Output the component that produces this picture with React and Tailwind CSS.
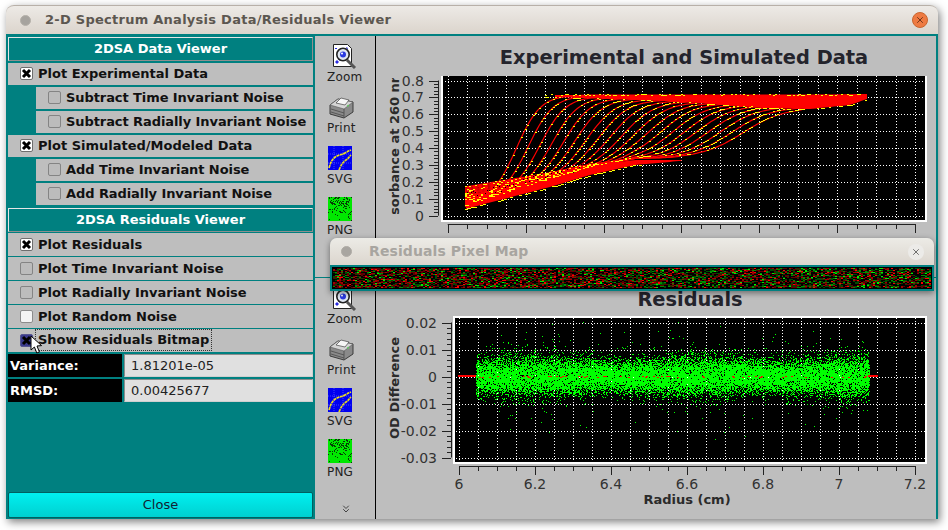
import { X, ChevronsDown } from 'lucide-react'

const rng = (seed) => () => {
  seed |= 0
  seed = (seed + 0x6d2b79f5) | 0
  let t = Math.imul(seed ^ (seed >>> 15), 1 | seed)
  t = (t + Math.imul(t ^ (t >>> 7), 61 | t)) ^ t
  return ((t ^ (t >>> 14)) >>> 0) / 4294967296
}

const lerp = (points, x) => {
  if (x <= points[0][0]) return points[0][1]
  for (let i = 1; i < points.length; i++) {
    if (x <= points[i][0]) {
      const [x0, y0] = points[i - 1]
      const [x1, y1] = points[i]
      return y0 + ((y1 - y0) * (x - x0)) / (x1 - x0)
    }
  }
  return points[points.length - 1][1]
}

const lowerEdge = [[465, 209], [500, 200], [550, 187], [590, 175], [635, 165], [680, 161], [760, 158]]
const solidTop = [[465, 196], [500, 189], [548, 177], [600, 164], [635, 160], [682, 160]]
const plateauLow = [[555, 97], [640, 100], [700, 103], [763, 108], [810, 109], [850, 105], [867, 99]]

function buildExperimental() {
  const rand = rng(11)
  const n = 20
  const curves = []
  let yellow = ''
  let black = ''
  for (let i = 0; i < n; i++) {
    const mid = 518 + (i * 227) / (n - 1)
    const width = 12 + i * 0.42
    let line = ''
    for (let x = 465; x <= 867; x += 2) {
      const base = lerp(lowerEdge, x) - (22 - Math.min(19, (x - 465) / 11)) * (i / n + 0.05)
      const settle = Math.max(0, Math.min(1, (x - 800) / 67))
      const top = 95 + (i / n) * 13 * (1 - settle)
      const s = 1 / (1 + Math.exp(-(x - mid) / width))
      const y = base + (top - base) * s
      line += `${x === 465 ? 'M' : 'L'}${x} ${y.toFixed(1)}`
      if (s < 0.95) {
        const chance = s < 0.1 ? 0.16 : 0.45
        if (rand() < chance) yellow += `M${x} ${Math.round(y - 1)}h2v1h-2z`
      }
    }
    curves.push(line)
  }
  for (let x = 465; x < 600; x += 2) {
    const top = lerp(solidTop, x) - 6
    if (rand() < 0.7) black += `M${x} ${Math.round(top + rand() * 8)}h1v1h-1z`
  }
  for (let x = 545; x <= 867; x += 2) {
    if (rand() < 0.45) yellow += `M${x} ${94 + Math.round(rand())}h2v1h-2z`
    if (rand() < 0.35) yellow += `M${x} ${Math.round(lerp(plateauLow, x))}h2v1h-2z`
  }
  for (let x = 465; x < 640; x += 3) {
    if (rand() < 0.6) yellow += `M${x} ${Math.round(lerp(lowerEdge, x))}h3v1h-3z`
  }
  const band = (top, bottom, from, to) => {
    let d = ''
    for (let x = from; x <= to; x += 3) d += `${d ? 'L' : 'M'}${x} ${lerp(top, x)}`
    for (let x = to; x >= from; x -= 3) d += `L${x} ${lerp(bottom, x)}`
    return d + 'z'
  }
  return {
    curves,
    yellow,
    black,
    lowBand: band(solidTop, lowerEdge, 465, 682),
    highBand: band([[555, 95], [867, 95]], plateauLow, 555, 867),
  }
}

function buildResiduals() {
  const rand = rng(29)
  const gauss = () => Math.sqrt(-2 * Math.log(rand() + 1e-6)) * Math.cos(6.2832 * rand())
  let green = ''
  let red = ''
  for (let x = 476; x <= 868; x++) {
    const wave = 1 + 0.14 * Math.sin(x / 26)
    for (let k = 0; k < 60; k++) {
      const sd = (rand() < 0.025 ? 22 : 9) * wave
      const y = Math.round(376 + gauss() * sd)
      green += `M${x} ${y}h${rand() < 0.4 ? 2 : 1}v1h-1z`
    }
    if (rand() < 0.14) red += `M${x} ${376 + Math.round(rand())}h2v1h-2z`
  }
  return { green, red }
}

function buildPixelMap() {
  const rand = rng(5)
  const paths = { '#ff0000': '', '#a00000': '', '#5c0000': '', '#00f000': '', '#009000': '', '#004c00': '' }
  const keys = Object.keys(paths)
  for (let y = 0; y < 20; y++) {
    for (let x = 0; x < 600; x += 2) {
      if (rand() < 0.62) {
        const redShare = x < 300 ? 0.62 : 0.5
        const v = rand()
        const tone = v < 0.12 ? 0 : v < 0.45 ? 1 : 2
        paths[keys[(rand() < redShare ? 0 : 3) + tone]] += `M${x} ${y}h2v1h-2z`
      }
    }
  }
  return paths
}

function buildNoiseIcon() {
  const rand = rng(3)
  let dark = ''
  for (let y = 0; y < 24; y++) {
    for (let x = 0; x < 24; x++) {
      if (rand() < Math.max(0.08, 0.42 - y * 0.02)) dark += `M${x} ${y}h1v1h-1z`
    }
  }
  return dark
}

const experimental = buildExperimental()
const residuals = buildResiduals()
const pixelMap = buildPixelMap()
const noiseIcon = buildNoiseIcon()

function Check({ state }) {
  const look = {
    checked: 'bg-white border-[#6e6e6e]',
    focus: 'bg-[#3a3a8c] border-[#55558f]',
    disabled: 'bg-[#bcbcbc] border-[#848484]',
    off: 'bg-[#f4f4f4] border-[#8c8c8c]',
  }[state]
  return (
    <span className={`flex h-[13px] w-[13px] shrink-0 items-center justify-center rounded-[2px] border ${look}`}>
      {(state === 'checked' || state === 'focus') && (
        <svg width="11" height="11" viewBox="0 0 11 11">
          <path d="M2 2l7 7M9 2l-7 7" stroke="#000" strokeWidth="3" />
        </svg>
      )}
    </span>
  )
}

function Row({ label, state, sub, focused }) {
  return (
    <div className={`flex h-[22.5px] items-center bg-[#bebebe] ${sub ? 'ml-[28px] pl-[12px] tracking-[-0.08px]' : 'pl-[12px]'}`}>
      <Check state={state} />
      {focused ? (
        <span className="ml-[2px] border border-dotted border-[#333] pr-[2px] pl-[2px] text-[13px] leading-[20px] font-bold text-[#111]">
          {label}
        </span>
      ) : (
        <span className="ml-[5px] text-[13px] font-bold text-[#111]">{label}</span>
      )}
    </div>
  )
}

function Banner({ children, className = '' }) {
  return (
    <div
      className={`flex h-[24px] items-center justify-center border border-t-[#e6e6e6] border-r-[#8f8f8f] border-b-[#8f8f8f] border-l-[#e6e6e6] bg-[#008080] text-[13px] font-bold text-white ${className}`}
    >
      {children}
    </div>
  )
}

function Readout({ label, value }) {
  return (
    <div className="mt-[1px] flex h-[22.5px] gap-[2px]">
      <div className="flex w-[114px] items-center bg-black pl-[2px] text-[13px] font-bold text-white">{label}</div>
      <div className="flex flex-1 items-center border border-t-[#8c8c8c] border-r-[#cfcfcf] border-b-[#cfcfcf] border-l-[#8c8c8c] bg-[#e0e0e0] pl-[6px] text-[13px] text-[#222]">
        {value}
      </div>
    </div>
  )
}

function ZoomIcon() {
  return (
    <svg width="26" height="26" viewBox="0 0 26 26">
      <path d="M1.5 1.5h14l4 4v18h-18z" fill="#fff" stroke="#222" />
      <path d="M3 19l2-2 2 2-2 2zM6 16l1-1 2 1-1 2zM14 4l2 1-1 2zM3 5h2v1H3z" fill="#2a2ae0" />
      <path d="M15 17l8 8" stroke="#555" strokeWidth="3" />
      <circle cx="11" cy="11.5" r="6.2" fill="#dfe6f2" stroke="#222" strokeWidth="1.6" />
      <circle cx="11" cy="11.5" r="3" fill="#2a3ae0" />
      <circle cx="10" cy="10.5" r="1" fill="#fff" />
    </svg>
  )
}

function PrintIcon() {
  return (
    <svg width="25" height="25" viewBox="0 0 25 25">
      <path d="M1 10l8-6 15 3v10l-9 6-14-4z" fill="#8a8a8a" stroke="#3c3c3c" />
      <path d="M1 10l14 4 9-7-15-3z" fill="#d4d4d4" stroke="#555" strokeWidth="0.6" />
      <path d="M7 8l5-5 8 2-4 5z" fill="#f6f6f6" stroke="#444" strokeWidth="0.7" />
      <path d="M15 14v9M2 14l13 4M2 17l13 4" stroke="#4a4a4a" strokeWidth="0.8" />
      <path d="M18 10.5l2-1v1.5l-2 1z" fill="#5ec45e" />
    </svg>
  )
}

function SvgIcon() {
  return (
    <svg width="24" height="24" viewBox="0 0 24 24">
      <rect width="24" height="24" fill="#0000f0" />
      <path d="M6 0v24M15 0v24M0 8h24M0 17h24" stroke="#8a8aff" strokeWidth="0.5" strokeDasharray="1 1" />
      <path d="M1 22C3 15 5 12 9 10s5-1 8-3 4-2 6-3" fill="none" stroke="#f0e020" strokeWidth="1.7" strokeDasharray="3 0.6" />
      <path d="M11 24c2-5 4-8 7-10s3-3 5-5" fill="none" stroke="#e8d820" strokeWidth="1.7" strokeDasharray="3 0.6" />
    </svg>
  )
}

function PngIcon() {
  return (
    <svg width="24" height="24" viewBox="0 0 24 24" shapeRendering="crispEdges">
      <rect width="24" height="24" fill="#00e800" />
      <path d={noiseIcon} fill="#063a06" />
    </svg>
  )
}

function Tool({ icon, label }) {
  return (
    <div className="flex h-[51px] flex-col items-center">
      <div className="flex h-[24px] items-center">{icon}</div>
      <span className="mt-[1px] text-[12px] leading-[17px] tracking-[0.2px] text-[#222]">{label}</span>
    </div>
  )
}

function Toolbar() {
  return (
    <div className="flex w-[61px] shrink-0 flex-col items-start border-r border-black pt-[8px] pl-[12px]">
      <Tool icon={<ZoomIcon />} label="Zoom" />
      <Tool icon={<PrintIcon />} label="Print" />
      <Tool icon={<SvgIcon />} label="SVG" />
      <Tool icon={<PngIcon />} label="PNG" />
    </div>
  )
}

function range(from, to, step) {
  const out = []
  for (let v = from; v <= to + 0.01; v += step) out.push(v)
  return out
}

function Grid({ left, right, top, bottom, xs, ys }) {
  return (
    <g stroke="#fff" strokeWidth="1" strokeDasharray="1 2">
      {xs.map((x) => (
        <line key={x} x1={Math.round(x) + 0.5} x2={Math.round(x) + 0.5} y1={top} y2={bottom} />
      ))}
      {ys.map((y) => (
        <line key={y} x1={left} x2={right} y1={Math.round(y) + 0.5} y2={Math.round(y) + 0.5} />
      ))}
    </g>
  )
}

function YAxis({ x, start, step, count, labels }) {
  const ticks = range(0, (count - 1) * 5, 1)
  return (
    <g stroke="#222" fontFamily="'DejaVu Sans', sans-serif">
      <line x1={x + 0.5} x2={x + 0.5} y1={start} y2={start + step * (count - 1)} />
      {ticks.map((i) => {
        const y = Math.round(start + (i * step) / 5) + 0.5
        return <line key={i} x1={x - (i % 5 === 0 ? 9 : 4)} x2={x} y1={y} y2={y} />
      })}
      {labels.map((label, i) => (
        <text key={label} x={x - 14} y={start + step * i + 5} textAnchor="end" fontSize="14" fill="#333" stroke="none">
          {label}
        </text>
      ))}
    </g>
  )
}

function XAxis({ y, start, step, count }) {
  const ticks = range(0, (count - 1) * 4, 1)
  return (
    <g stroke="#222">
      <line x1={start} x2={start + step * (count - 1)} y1={y + 0.5} y2={y + 0.5} />
      {ticks.map((i) => {
        const x = Math.round(start + (i * step) / 4) + 0.5
        return <line key={i} x1={x} x2={x} y1={y} y2={y + (i % 4 === 0 ? 9 : 5)} />
      })}
    </g>
  )
}

function ExperimentalPlot() {
  return (
    <svg className="block" width="560" height="201" viewBox="376 76 560 201">
      <clipPath id="ytitle">
        <rect x="380" y="78" width="30" height="136" />
      </clipPath>
      <g clipPath="url(#ytitle)">
        <text
          transform="translate(399 152) rotate(-90)"
          textAnchor="middle"
          fontFamily="'DejaVu Sans', sans-serif"
          fontWeight="700"
          fontSize="13"
          fill="#2b2b2b"
        >
          Absorbance at 260 nm
        </text>
      </g>
      <YAxis x={438} start={80.5} step={16.9} count={9} labels={['0.8', '0.7', '0.6', '0.5', '0.4', '0.3', '0.2', '0.1', '0']} />
      <XAxis y={224} start={447.7} step={77.9} count={7} />
      <rect x="441" y="76" width="486" height="146" fill="#fff" />
      <rect x="443" y="76" width="482" height="144" fill="#000" />
      <Grid
        left={445}
        right={925}
        top={76}
        bottom={220}
        xs={range(447.7, 915, 19.47)}
        ys={range(80.5, 216, 16.9)}
      />
      <path d={experimental.lowBand} fill="#ff0000" />
      <path d={experimental.highBand} fill="#ff0000" />
      {experimental.curves.map((d) => (
        <path key={d} d={d} fill="none" stroke="#ff0000" strokeWidth="1.2" />
      ))}
      <g shapeRendering="crispEdges">
        <path d={experimental.black} fill="#000" />
        <path d={experimental.yellow} fill="#ffff00" />
      </g>
    </svg>
  )
}

function ResidualsPlot() {
  const xLabels = ['6', '6.2', '6.4', '6.6', '6.8', '7', '7.2']
  return (
    <svg className="block" width="560" height="201" viewBox="376 316 560 201" fontFamily="'DejaVu Sans', sans-serif">
      <text
        transform="translate(399 388) rotate(-90)"
        textAnchor="middle"
        fontWeight="700"
        fontSize="13"
        fill="#2b2b2b"
      >
        OD Difference
      </text>
      <YAxis x={451} start={322.5} step={27} count={6} labels={['0.02', '0.01', '0', '-0.01', '-0.02', '-0.03']} />
      <XAxis y={466} start={459} step={76} count={7} />
      {xLabels.map((label, i) => (
        <text key={label} x={459 + i * 76} y={489} textAnchor="middle" fontSize="14" fill="#333">
          {label}
        </text>
      ))}
      <text x="687" y="504" textAnchor="middle" fontWeight="700" fontSize="13" fill="#2b2b2b">
        Radius (cm)
      </text>
      <rect x="453" y="316" width="474" height="148" fill="#fff" />
      <rect x="455" y="318" width="470" height="144" fill="#000" />
      <Grid
        left={456}
        right={925}
        top={318}
        bottom={462}
        xs={range(459, 915, 19)}
        ys={range(322.5, 458, 27)}
      />
      <g shapeRendering="crispEdges">
        <path d={residuals.green} fill="#00ff00" />
        <path d={residuals.red} fill="#ff0000" />
        <rect x="458" y="375" width="18" height="2" fill="#ff0000" />
        <rect x="868" y="375" width="10" height="2" fill="#ff0000" />
      </g>
    </svg>
  )
}

function PlotPane({ title, titleBox, children }) {
  return (
    <div className="flex h-[241px] bg-[#bebebe]">
      <Toolbar />
      <div className="flex-1">
        <div className={`flex items-center justify-center text-[19.4px] font-bold text-[#24242c] ${titleBox}`}>{title}</div>
        {children}
      </div>
    </div>
  )
}

function PixelMapWindow() {
  return (
    <div className="absolute top-[233px] left-[324px] w-[604px] rounded-t-[7px] shadow-[0_2px_6px_rgba(0,0,0,0.45)]">
      <div className="flex h-[27px] items-center rounded-t-[7px] bg-gradient-to-b from-[#ecebe6] to-[#dcd6ce] pr-[10px] pl-[11px]">
        <span className="h-[11px] w-[11px] rounded-full border border-[#b0aca6] bg-[#a8a5a0]" />
        <span className="ml-[17px] text-[14px] font-bold tracking-[0.1px] text-[#a8a5a0]">Residuals Pixel Map</span>
        <span className="ml-auto flex h-[16px] w-[16px] items-center justify-center rounded-full bg-[#ecebe8]">
          <X className="h-[10px] w-[10px] text-[#555]" strokeWidth={2} />
        </span>
      </div>
      <div className="border-2 border-[#008080] bg-black p-[1px]">
        <svg className="block" width="598" height="20" viewBox="0 0 600 20" preserveAspectRatio="none" shapeRendering="crispEdges">
          {Object.entries(pixelMap).map(([color, d]) => (
            <path key={color} d={d} fill={color} />
          ))}
        </svg>
      </div>
    </div>
  )
}

function Cursor() {
  return (
    <svg className="absolute top-[330px] left-[24px]" width="14" height="20" viewBox="0 0 14 20">
      <path d="M1 1l0 14 3.4-3 2.4 6 2.6-1-2.4-6 4.6-.4z" fill="#fff" stroke="#000" strokeWidth="1" />
    </svg>
  )
}

export default function App() {
  return (
    <div className="h-[530px] w-[948px] overflow-hidden bg-white pt-[5px] pl-[6px] font-['DejaVu_Sans',sans-serif]">
      <div className="relative w-[932px] rounded-t-[8px] shadow-[2px_3px_8px_rgba(0,0,0,0.5)]">
        <div className="flex h-[29px] items-center rounded-t-[8px] border-t border-[#b8b0a8] bg-gradient-to-b from-[#edeae6] to-[#dbd4cc] pr-[10px] pl-[14px]">
          <span className="h-[11px] w-[11px] rounded-full border border-[#b5b1aa] bg-[#a6a39e]" />
          <span className="ml-[14px] text-[13px] font-bold tracking-[0.26px] text-[#5c5750]">
            2-D Spectrum Analysis Data/Residuals Viewer
          </span>
          <span className="ml-auto flex h-[16px] w-[16px] items-center justify-center rounded-full border border-[#c9662f] bg-[#ee7a42]">
            <X className="h-[10px] w-[10px] text-[#5a2a12]" strokeWidth={2} />
          </span>
        </div>
        <div className="flex h-[485px] border-2 border-[#008080] bg-[#008080]">
          <div className="flex w-[307px] shrink-0 flex-col pt-[1px] pr-[2px]">
            <div className="flex flex-col gap-[1.5px]">
              <Banner>2DSA Data Viewer</Banner>
              <Row label="Plot Experimental Data" state="checked" />
              <Row label="Subtract Time Invariant Noise" state="disabled" sub />
              <Row label="Subtract Radially Invariant Noise" state="disabled" sub />
              <Row label="Plot Simulated/Modeled Data" state="checked" />
              <Row label="Add Time Invariant Noise" state="disabled" sub />
              <Row label="Add Radially Invariant Noise" state="disabled" sub />
              <Banner className="mt-[1px]">2DSA Residuals Viewer</Banner>
              <Row label="Plot Residuals" state="checked" />
              <Row label="Plot Time Invariant Noise" state="disabled" />
              <Row label="Plot Radially Invariant Noise" state="disabled" />
              <Row label="Plot Random Noise" state="off" />
              <Row label="Show Residuals Bitmap" state="focus" focused />
              <Readout label="Variance:" value="1.81201e-05" />
              <Readout label="RMSD:" value="0.00425677" />
            </div>
            <button className="mt-auto mb-[-1px] h-[26px] rounded-[2px] border border-[#006060] bg-gradient-to-b from-[#00f0f0] to-[#00d0d0] text-[13px] text-[#123]">
              Close
            </button>
          </div>
          <div className="flex-1">
            <PlotPane title="Experimental and Simulated Data" titleBox="h-[40px] pt-[4px] pr-[11px] pl-[67px]">
              <ExperimentalPlot />
            </PlotPane>
            <div className="h-px bg-[#008080]" />
            <PlotPane title="Residuals" titleBox="h-[38px] pt-[6px] pr-[11px] pl-[79px]">
              <ResidualsPlot />
            </PlotPane>
          </div>
        </div>
        <PixelMapWindow />
        <ChevronsDown className="absolute top-[498px] left-[334px] h-[12px] w-[12px] text-[#444]" />
        <Cursor />
      </div>
    </div>
  )
}
